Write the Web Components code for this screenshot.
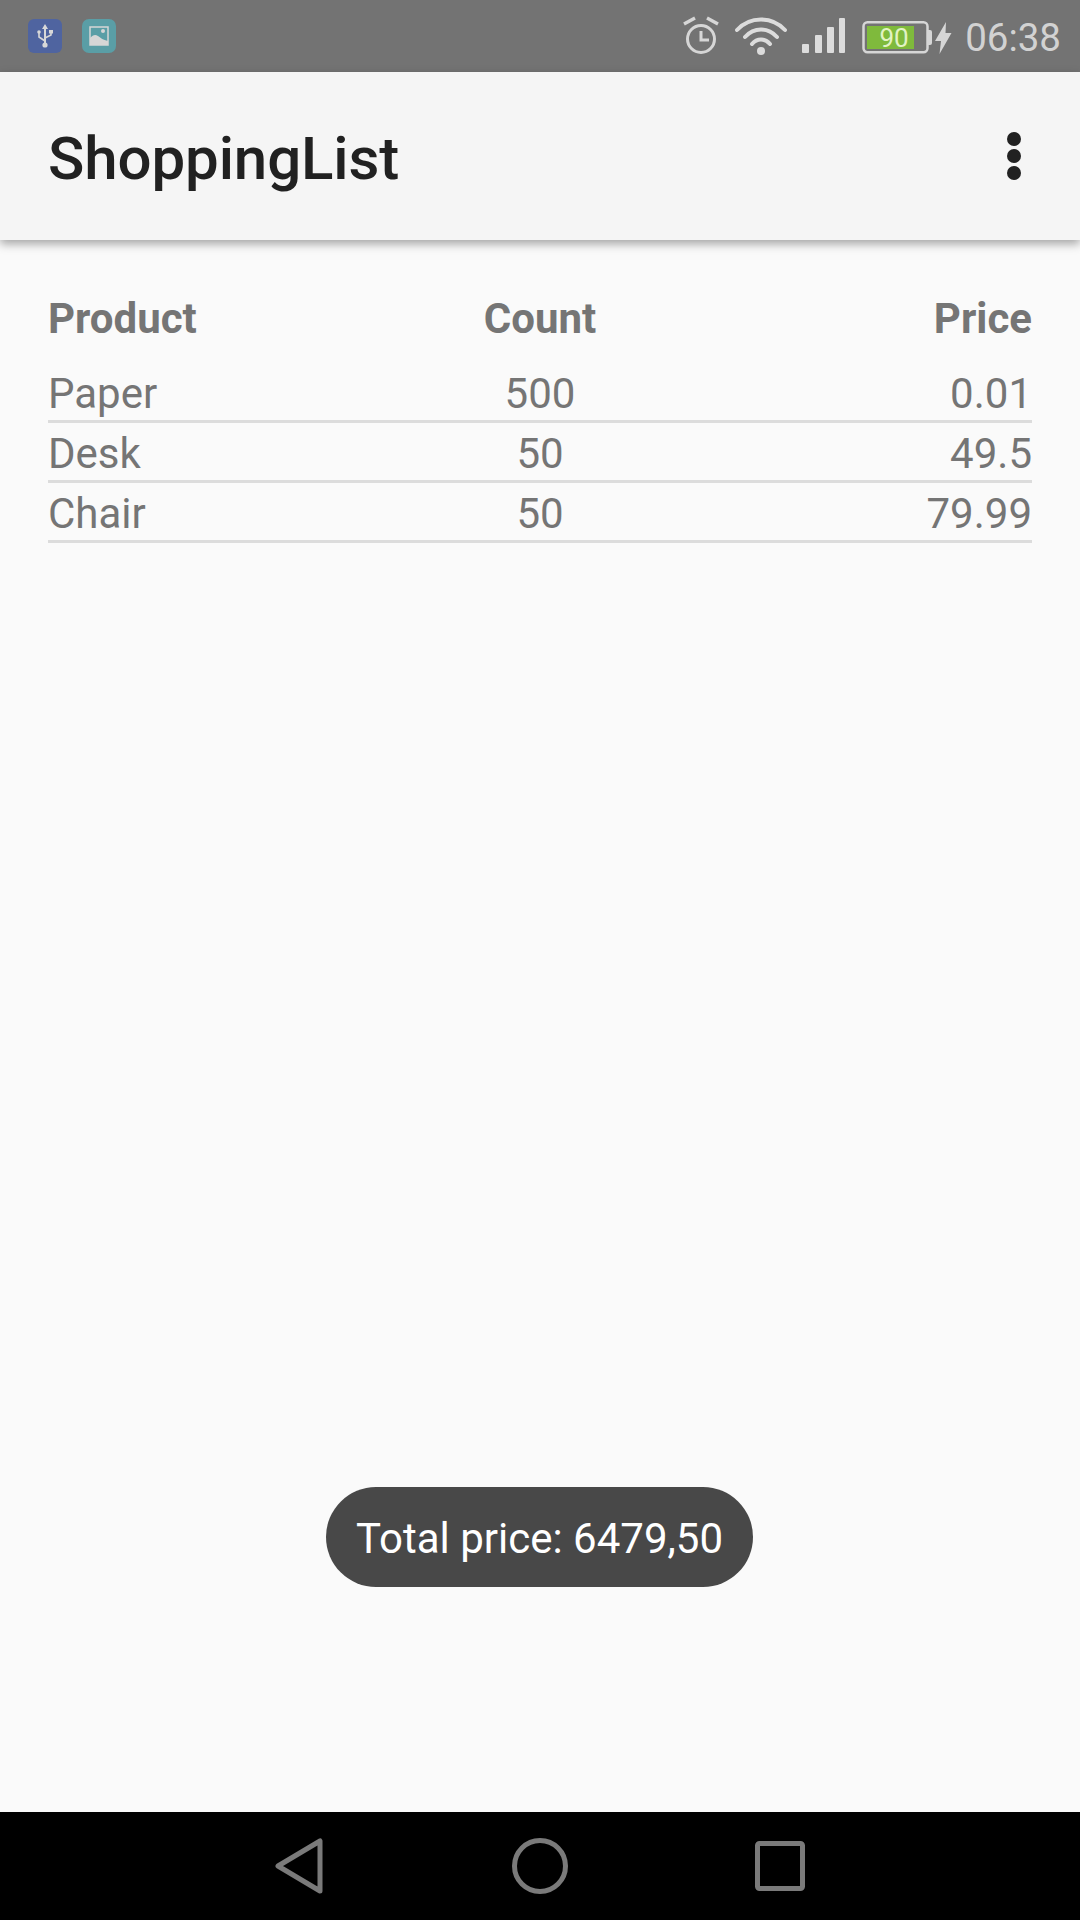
<!DOCTYPE html>
<html>
<head>
<meta charset="utf-8">
<style>
    html, body { margin: 0; padding: 0; }
    body { width: 1080px; height: 1920px; overflow: hidden; font-family: Roboto, sans-serif; }
</style>
</head>
<body>
<phone-screen>
    <status-bar slot="top" time="06:38" level="90"></status-bar>
    <app-bar slot="top" title="ShoppingList"></app-bar>
    <product-table>
        <product-row header><span>Product</span><span>Count</span><span>Price</span></product-row>
        <product-row><span>Paper</span><span>500</span><span>0.01</span></product-row>
        <product-row><span>Desk</span><span>50</span><span>49.5</span></product-row>
        <product-row><span>Chair</span><span>50</span><span>79.99</span></product-row>
    </product-table>
    <toast-message slot="overlay">Total price: 6479,50</toast-message>
    <nav-bar slot="bottom"></nav-bar>
</phone-screen>

<script>
class PhoneScreen extends HTMLElement {
    constructor() {
        super();
        this.attachShadow({ mode: 'open' });
    }

    connectedCallback() {
        this.shadowRoot.innerHTML = `
        <style>
            :host {
                display: flex;
                flex-direction: column;
                position: relative;
                width: 1080px;
                height: 1920px;
                background: #fafafa;
            }
            main { flex: 1; }
        </style>
        <slot name="top"></slot>
        <main><slot></slot></main>
        <slot name="overlay"></slot>
        <slot name="bottom"></slot>
        `;
    }
}

class StatusBar extends HTMLElement {
    constructor() {
        super();
        this.attachShadow({ mode: 'open' });
    }

    connectedCallback() {
        const time = this.getAttribute('time');
        const level = this.getAttribute('level');
        this.shadowRoot.innerHTML = `
        <style>
            :host {
                display: flex;
                align-items: flex-start;
                height: 72px;
                background: #737373;
                font-family: Roboto, sans-serif;
            }
            svg { display: block; flex: none; margin-top: 15px; }
            .spacer { flex: 1; }
            .usb { margin-left: 28px; margin-top: 19px; }
            .img { margin-left: 20px; margin-top: 19px; }
            .level {
                font-size: 26px;
                fill: #e2f3c4;
            }
            .time {
                margin: 16px 19px 0 0;
                font-size: 38.5px;
                line-height: 44px;
                color: #d2d2d2;
            }
        </style>
        <svg class="usb" width="34" height="34" viewBox="0 0 34 34">
            <rect width="34" height="34" rx="6" fill="#4f64a0"/>
            <path d="M17 5l3 5h-2v14h-2V10h-2z" fill="#d8d8d8"/>
            <circle cx="17" cy="26" r="2.6" fill="#d8d8d8"/>
            <path d="M17 22l-6-4v-4M17 19l6-3v-3" fill="none" stroke="#d8d8d8" stroke-width="1.6"/>
            <circle cx="11" cy="13" r="1.8" fill="#d8d8d8"/>
            <rect x="21" y="11" width="4" height="3.5" fill="#d8d8d8"/>
        </svg>
        <svg class="img" width="34" height="34" viewBox="0 0 34 34">
            <rect width="34" height="34" rx="7" fill="#5a9ea6"/>
            <rect x="8" y="8" width="18" height="18" fill="none" stroke="#d6d6d6" stroke-width="1.5"/>
            <path d="M8 26v-7c3-3 5-4 8-2s5 4 10 5v4z" fill="#d6d6d6"/>
            <circle cx="21" cy="12" r="2" fill="#d6d6d6"/>
        </svg>
        <div class="spacer"></div>
        <svg width="40" height="40" viewBox="0 0 40 40" style="margin-top:15px;margin-right:14px">
            <circle cx="20" cy="24" r="13.500" fill="none" stroke="#d6d6d6" stroke-width="3"/>
            <path d="M20 16v9h8" fill="none" stroke="#d6d6d6" stroke-width="3"/>
            <path d="M3 9l11-6M37 9L26 3" fill="none" stroke="#d6d6d6" stroke-width="3.4"/>
        </svg>
        <svg width="52" height="38" viewBox="0 0 52 38" style="margin-top:17px;margin-right:15px">
            <path d="M2 13C15 -1 37 -1 50 13" fill="none" stroke="#dcdcdc" stroke-width="4" stroke-linecap="round"/>
            <path d="M10 20C19 10 33 10 42 20" fill="none" stroke="#dcdcdc" stroke-width="4" stroke-linecap="round"/>
            <path d="M17 27C22 21 30 21 35 27" fill="none" stroke="#dcdcdc" stroke-width="4" stroke-linecap="round"/>
            <circle cx="26" cy="34" r="4" fill="#dcdcdc"/>
        </svg>
        <svg width="44" height="36" viewBox="0 0 44 36" style="margin-top:18px;margin-right:16px">
            <rect x="0" y="26" width="7" height="9" rx="1" fill="#dcdcdc"/>
            <rect x="13" y="17" width="7" height="18" rx="1" fill="#dcdcdc"/>
            <rect x="25" y="9" width="7" height="26" rx="1" fill="#dcdcdc"/>
            <rect x="37" y="0" width="6" height="35" rx="1" fill="#dcdcdc"/>
        </svg>
        <svg width="70" height="34" viewBox="0 0 70 34" style="margin-top:20px;margin-right:3px">
            <rect x="1.500" y="2.250" width="64" height="30" rx="4" fill="none" stroke="#d6d6d6" stroke-width="2.5"/>
            <path d="M66 10h2a2 2 0 0 1 2 2v11a2 2 0 0 1-2 2h-2z" fill="#d6d6d6"/>
            <rect x="5" y="6" width="47" height="23" fill="#7fba3c"/>
            <text class="level" x="32" y="27" text-anchor="middle">${level}</text>
        </svg>
        <svg width="17" height="32" viewBox="0 0 17 32" style="margin-top:22px;margin-right:13px">
            <path d="M11 0L0 19h6L4.500 32 16.500 11H10.500z" fill="#d6d6d6"/>
        </svg>
        <span class="time">${time}</span>
        `;
    }
}

class AppBar extends HTMLElement {
    constructor() {
        super();
        this.attachShadow({ mode: 'open' });
    }

    connectedCallback() {
        this.shadowRoot.innerHTML = `
        <style>
            :host {
                display: flex;
                position: relative;
                justify-content: space-between;
                align-items: flex-start;
                height: 168px;
                padding: 0 48px;
                background: #f5f5f5;
                box-shadow: 0 4px 9px rgba(0, 0, 0, 0.34);
                font-family: Roboto, sans-serif;
            }
            h1 {
                margin: 0;
                padding-top: 52px;
                font-size: 60px;
                line-height: 70px;
                font-weight: 500;
                color: #212121;
                letter-spacing: -0.1px;
            }
            svg { display: block; margin: 60px 6px 0 0; }
        </style>
        <h1>${this.getAttribute('title')}</h1>
        <svg width="24" height="48" viewBox="0 0 24 48">
            <circle cx="12" cy="7" r="7" fill="#212121"/>
            <circle cx="12" cy="24" r="7" fill="#212121"/>
            <circle cx="12" cy="41" r="7" fill="#212121"/>
        </svg>
        `;
    }
}

class ProductTable extends HTMLElement {
    constructor() {
        super();
        this.attachShadow({ mode: 'open' });
    }

    connectedCallback() {
        this.shadowRoot.innerHTML = `
        <style>
            :host {
                display: flex;
                flex-direction: column;
                padding: 49px 48px 0;
                font-family: Roboto, sans-serif;
                font-size: 42px;
                color: #757575;
            }
        </style>
        <slot></slot>
        `;
    }
}

class ProductRow extends HTMLElement {
    constructor() {
        super();
        this.attachShadow({ mode: 'open' });
    }

    connectedCallback() {
        this.shadowRoot.innerHTML = `
        <style>
            :host {
                display: grid;
                grid-template-columns: 1fr 1fr 1fr;
                padding-top: 5px;
                line-height: 52px;
                border-bottom: 3px solid #dcdcdc;
            }
            :host([header]) {
                padding: 0 0 14px;
                line-height: 60px;
                font-weight: 700;
                border-bottom: none;
            }
            ::slotted(:nth-child(2)) { text-align: center; }
            ::slotted(:nth-child(3)) { text-align: right; }
        </style>
        <slot></slot>
        `;
    }
}

class ToastMessage extends HTMLElement {
    constructor() {
        super();
        this.attachShadow({ mode: 'open' });
    }

    connectedCallback() {
        this.shadowRoot.innerHTML = `
        <style>
            :host {
                position: absolute;
                left: 326px;
                top: 1487px;
                width: 427px;
                height: 98px;
                padding-top: 2px;
                display: flex;
                align-items: center;
                justify-content: center;
                border-radius: 50px;
                background: #484848;
                color: #ffffff;
                font-family: Roboto, sans-serif;
                font-size: 42px;
            }
        </style>
        <slot></slot>
        `;
    }
}

class NavBar extends HTMLElement {
    constructor() {
        super();
        this.attachShadow({ mode: 'open' });
    }

    connectedCallback() {
        this.shadowRoot.innerHTML = `
        <style>
            :host {
                display: grid;
                grid-template-columns: 180px 240px 240px 240px 180px;
                height: 108px;
                background: #000000;
            }
            svg { display: block; grid-row: 1; align-self: center; justify-self: center; }
        </style>
        <svg style="grid-column:2" width="50" height="56" viewBox="0 0 50 56">
            <path d="M3 28L45 3V53Z" fill="none" stroke="#7a7a7a" stroke-width="5" stroke-linejoin="round"/>
        </svg>
        <svg style="grid-column:3" width="56" height="56" viewBox="0 0 56 56">
            <circle cx="28" cy="28" r="25.500" fill="none" stroke="#7a7a7a" stroke-width="5"/>
        </svg>
        <svg style="grid-column:4" width="50" height="50" viewBox="0 0 50 50">
            <rect x="2.500" y="2.500" width="45" height="45" rx="2" fill="none" stroke="#7a7a7a" stroke-width="5"/>
        </svg>
        `;
    }
}

customElements.define('phone-screen', PhoneScreen);
customElements.define('status-bar', StatusBar);
customElements.define('app-bar', AppBar);
customElements.define('product-table', ProductTable);
customElements.define('product-row', ProductRow);
customElements.define('toast-message', ToastMessage);
customElements.define('nav-bar', NavBar);
</script>
</body>
</html>
